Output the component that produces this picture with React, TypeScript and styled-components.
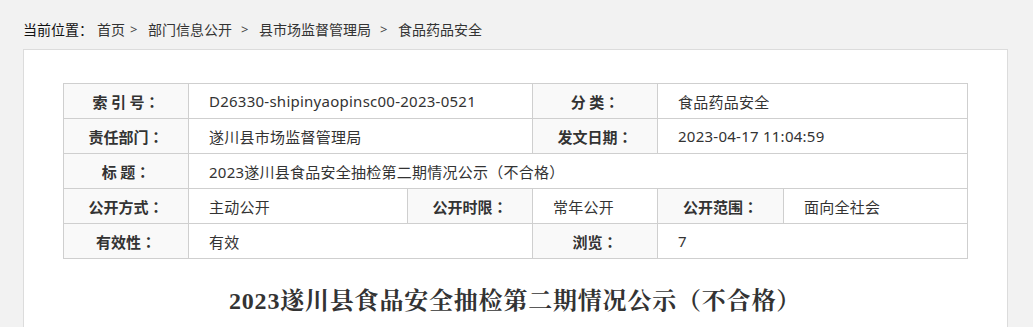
import React from "react";
import styled, { createGlobalStyle } from "styled-components";

const Global = createGlobalStyle`
  html, body { margin: 0; padding: 0; background: #f2f2f2; }
  body { font-family: "Noto Sans", "Noto Sans CJK SC", sans-serif; color: #333; }
  * { box-sizing: border-box; }
`;

const Page = styled.div`
  padding: 19px 0 0 23px;
`;

const Crumbs = styled.div`
  display: flex;
  align-items: center;
  height: 20px;
  font-size: 14px;
  line-height: 20px;
  font-family: "Noto Sans CJK SC", sans-serif;
  color: #333;
  margin-bottom: 10px;
`;

const CrumbLabel = styled.span`
  color: #111;
  margin-right: 4px;
`;

const CrumbLink = styled.span`
  color: #333;
`;

const Sep = styled.span<{ $lead: number }>`
  display: inline-block;
  width: 7px;
  margin: 0 11px 0 ${(p) => p.$lead}px;
  color: #444;
  font-family: "Noto Sans", sans-serif;
  font-size: 13px;
`;

const Panel = styled.div`
  width: 985px;
  min-height: 300px;
  background: #fff;
  border: 1px solid #dcdcdc;
  padding: 33px 40px 0 39px;
`;

const Table = styled.div`
  display: grid;
  grid-template-columns: 125px 219px 125px 125px 126px 184px;
  grid-auto-rows: 35px;
  width: 905px;
  border-left: 1px solid #cfcfcf;
  border-top: 1px solid #cfcfcf;
`;

const Cell = styled.div<{ $span?: number }>`
  grid-column: span ${(p) => p.$span ?? 1};
  display: flex;
  align-items: center;
  border-right: 1px solid #cfcfcf;
  border-bottom: 1px solid #cfcfcf;
  font-size: 15px;
  white-space: nowrap;
`;

const Label = styled(Cell)`
  justify-content: center;
  background: #f9f9f9;
  font-weight: bold;
  color: #333;
  font-family: "Noto Sans CJK SC", sans-serif;
`;

const Colon = styled.span`
  font-family: "Noto Sans CJK TC", "Noto Sans CJK SC", sans-serif;
`;

const Value = styled(Cell)`
  padding-left: 20px;
  color: #333;
  letter-spacing: 0.25px;
`;

const Title = styled.h1`
  margin: 26px 0 0;
  text-align: center;
  font-family: "Liberation Serif", "Noto Serif CJK SC", "Noto Sans CJK SC", serif;
  font-size: 24px;
  line-height: 32px;
  font-weight: bold;
  color: #333;
  letter-spacing: 0.8px;
`;

const L = ({ text, span }: { text: string; span?: number }) => (
  <Label $span={span}>
    {text}
    <Colon>：</Colon>
  </Label>
);

export default function App() {
  return (
    <>
      <Global />
      <Page>
        <Crumbs>
          <CrumbLabel>当前位置：</CrumbLabel>
          <CrumbLink>首页</CrumbLink>
          <Sep $lead={5}>&gt;</Sep>
          <CrumbLink>部门信息公开</CrumbLink>
          <Sep $lead={9}>&gt;</Sep>
          <CrumbLink>县市场监督管理局</CrumbLink>
          <Sep $lead={9}>&gt;</Sep>
          <CrumbLink>食品药品安全</CrumbLink>
        </Crumbs>
        <Panel>
          <Table>
            <L text="索 引 号" />
            <Value $span={2}>D26330-shipinyaopinsc00-2023-0521</Value>
            <L text="分 类" />
            <Value $span={2}>食品药品安全</Value>

            <L text="责任部门" />
            <Value $span={2}>遂川县市场监督管理局</Value>
            <L text="发文日期" />
            <Value $span={2}>2023-04-17 11:04:59</Value>

            <L text="标 题" />
            <Value $span={5}>2023遂川县食品安全抽检第二期情况公示（不合格）</Value>

            <L text="公开方式" />
            <Value>主动公开</Value>
            <L text="公开时限" />
            <Value>常年公开</Value>
            <L text="公开范围" />
            <Value>面向全社会</Value>

            <L text="有效性" />
            <Value $span={2}>有效</Value>
            <L text="浏览" />
            <Value $span={2}>7</Value>
          </Table>
          <Title>2023遂川县食品安全抽检第二期情况公示（不合格）</Title>
        </Panel>
      </Page>
    </>
  );
}
